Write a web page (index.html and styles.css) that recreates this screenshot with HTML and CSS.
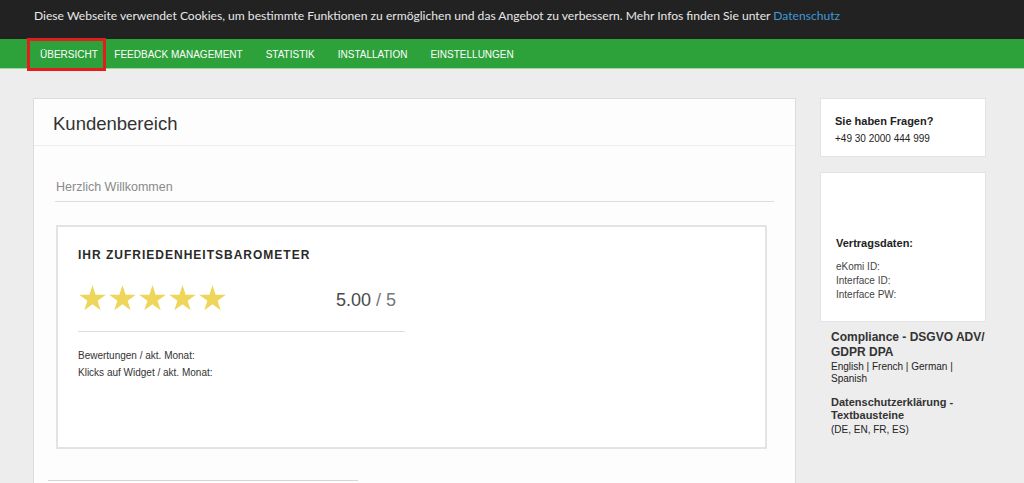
FILE: index.html
```html
<!DOCTYPE html>
<html lang="de">
<head>
<meta charset="utf-8">
<title>Kundenbereich</title>
<link rel="stylesheet" href="styles.css">
</head>
<body>
<svg class="defs" width="0" height="0" aria-hidden="true">
  <symbol id="star" viewBox="0 0 27 26">
    <polygon points="13.5,0 16.64,9.67 26.81,9.67 18.59,15.65 21.73,25.33 13.5,19.35 5.27,25.33 8.41,15.65 0.19,9.67 10.36,9.67"/>
  </symbol>
</svg>
<div class="cookie">Diese Webseite verwendet Cookies, um bestimmte Funktionen zu ermöglichen und das Angebot zu verbessern. Mehr Infos finden Sie unter <a href="#">Datenschutz</a></div>
<nav class="nav">
  <a class="nav-item active" href="#">ÜBERSICHT</a>
  <a class="nav-item" href="#">FEEDBACK MANAGEMENT</a>
  <a class="nav-item" href="#">STATISTIK</a>
  <a class="nav-item" href="#">INSTALLATION</a>
  <a class="nav-item" href="#">EINSTELLUNGEN</a>
</nav>
<div class="page">
  <main class="panel">
    <div class="panel-head">Kundenbereich</div>
    <div class="panel-body">
      <div class="welcome">Herzlich Willkommen</div>
      <section class="barometer">
        <h2 class="baro-title">IHR ZUFRIEDENHEITSBAROMETER</h2>
        <div class="baro-col">
          <div class="rating-row">
            <div class="stars">
              <svg class="star"><use href="#star"/></svg>
              <svg class="star"><use href="#star"/></svg>
              <svg class="star"><use href="#star"/></svg>
              <svg class="star"><use href="#star"/></svg>
              <svg class="star"><use href="#star"/></svg>
            </div>
            <div class="score">5.00 <span class="of">/ 5</span></div>
          </div>
          <div class="stats">
            <div>Bewertungen / akt. Monat:</div>
            <div>Klicks auf Widget / akt. Monat:</div>
          </div>
        </div>
      </section>
      <div class="next-line"></div>
    </div>
  </main>
  <aside class="sidebar">
    <div class="sbox contact">
      <div class="sb-title">Sie haben Fragen?</div>
      <div class="sb-text">+49 30 2000 444 999</div>
    </div>
    <div class="sbox contract">
      <div class="sb-title">Vertragsdaten:</div>
      <div class="contract-list">
        <div>eKomi ID:</div>
        <div>Interface ID:</div>
        <div>Interface PW:</div>
      </div>
    </div>
    <div class="compliance">
      <div class="cp-title">Compliance - DSGVO ADV/ GDPR DPA</div>
      <div class="cp-langs">English | French | German | Spanish</div>
      <div class="cp-sub">Datenschutzerklärung - Textbausteine</div>
      <div class="cp-langs2">(DE, EN, FR, ES)</div>
    </div>
  </aside>
</div>
</body>
</html>
```
FILE: styles.css
```css
* { box-sizing: border-box; }
html, body { margin: 0; padding: 0; }
body {
  background: #ededed;
  font-family: "Liberation Sans", Arial, sans-serif;
  color: #333;
  height: 483px;
  overflow: hidden;
}
.defs { position: absolute; }

.cookie {
  background: #222222;
  color: #e8e8e8;
  font-family: Lato, "Open Sans", sans-serif;
  font-size: 12.1px;
  line-height: 18px;
  height: 39px;
  padding: 7px 0 0 34px;
  white-space: nowrap;
}
.cookie a { color: #3f9ad8; text-decoration: none; }

.nav {
  background: #2da13a;
  height: 30px;
  display: flex;
  align-items: flex-end;
  padding-left: 30px;
  border-bottom: 1px solid #9ed5a3;
}
.nav-item {
  color: #fff;
  text-decoration: none;
  font-size: 10px;
  line-height: 27px;
  padding: 0 11.5px;
}
.nav-item.active {
  padding: 0 5px 0 10px;
  outline: 3px solid #e21d1d;
  outline-offset: 0;
}

.page {
  display: flex;
  gap: 24px;
  padding: 29px 0 0 33px;
}
.panel {
  flex: none;
  width: 763px;
  height: 420px;
  background: #fdfdfd;
  border: 1px solid #dcdcdc;
}
.panel-head {
  height: 47px;
  border-bottom: 1px solid #eeeeee;
  padding: 8px 0 0 19px;
  font-size: 18.5px;
  line-height: 34px;
  color: #333;
}
.panel-body { padding: 0 21px; }
.welcome {
  margin-top: 33px;
  font-size: 12.5px;
  line-height: 16px;
  color: #8a8a8a;
  padding: 0 0 6px 1px;
  border-bottom: 1px solid #dddddd;
}
.barometer {
  margin: 23px 7px 0 1px;
  height: 224px;
  border: 2px solid #e3e3e3;
  padding: 20px 20px 0 20px;
  background: #fff;
}
.baro-title {
  margin: 0;
  font-size: 12px;
  line-height: 16px;
  font-weight: bold;
  letter-spacing: 1px;
  color: #2a2a2a;
}
.baro-col { width: 327px; }
.rating-row {
  margin-top: 22px;
  height: 26px;
  display: flex;
  justify-content: space-between;
  align-items: center;
  padding: 0 9px 0 1px;
}
.stars { display: flex; gap: 3px; }
.star { width: 27px; height: 26px; fill: #eed65a; }
.score {
  font-size: 18px;
  color: #4a4a4a;
  padding-top: 4px;
}
.score .of { color: #777; }
.stats {
  margin-top: 20px;
  border-top: 1px solid #dedede;
  padding-top: 15px;
  font-size: 10px;
  line-height: 17px;
  color: #333;
}
.next-line {
  margin: 31px 0 0 -7px;
  width: 310px;
  border-top: 1px solid #d6d6d6;
}

.sidebar { flex: none; width: 166px; }
.sbox {
  background: #fff;
  border: 1px solid #e3e3e3;
  padding: 14px 10px 0 14px;
}
.contact { height: 59px; }
.sb-title { font-size: 11px; font-weight: bold; line-height: 17px; color: #222; }
.sb-text { font-size: 10px; line-height: 17px; color: #222; }
.contract {
  margin-top: 15px;
  height: 150px;
  padding: 62px 10px 0 15px;
}
.contract-list {
  margin-top: 8px;
  font-size: 10px;
  line-height: 14px;
  color: #444;
}
.compliance {
  padding: 8px 0 0 11px;
  color: #333;
}
.cp-title { font-size: 12px; font-weight: bold; line-height: 15px; }
.cp-langs { font-size: 10px; line-height: 12px; margin-top: 1px; color: #222; width: 130px; }
.cp-sub { font-size: 11px; font-weight: bold; line-height: 13px; margin-top: 11px; }
.cp-langs2 { font-size: 10px; line-height: 13px; margin-top: 1px; color: #222; }
```
